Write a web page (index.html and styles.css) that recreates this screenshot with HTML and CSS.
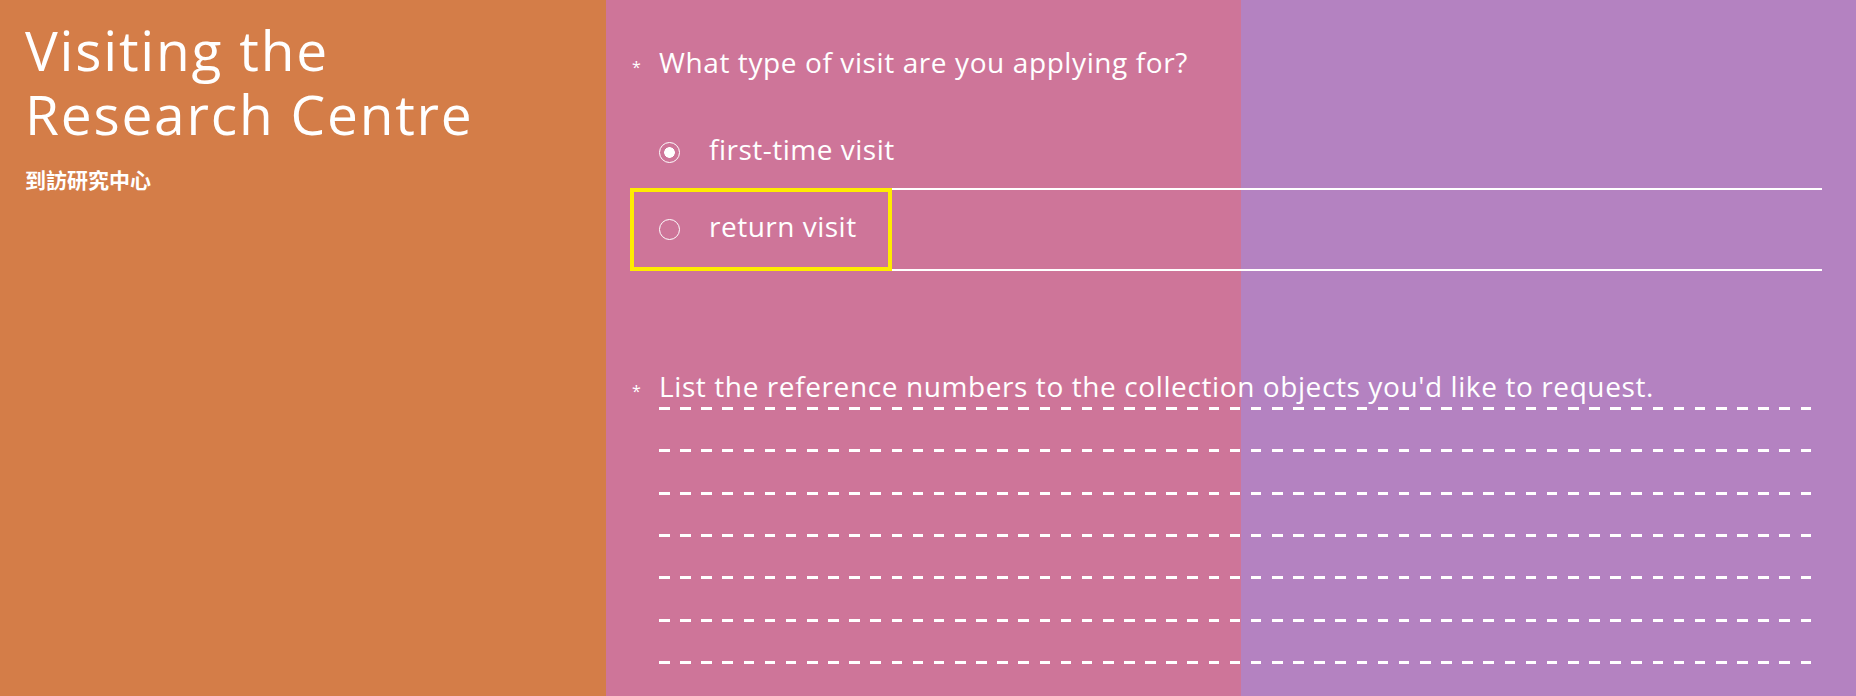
FILE: index.html
```html
<!DOCTYPE html>
<html lang="en">
<head>
<meta charset="utf-8">
<title>Visiting the Research Centre</title>
<link rel="stylesheet" href="styles.css">
</head>
<body>
<div class="page">
  <aside class="intro">
    <h1 class="intro-title">Visiting the<br>Research Centre</h1>
    <p class="intro-sub" lang="zh-Hant">到訪研究中心</p>
  </aside>
  <main class="form">
    <fieldset class="field">
      <legend class="question"><span class="req">*</span>What type of visit are you applying for?</legend>
      <div class="options">
        <div class="option option-first">
          <label class="choice">
            <input class="radio" type="radio" name="visit" checked>
            <span class="choice-text">first-time visit</span>
          </label>
        </div>
        <div class="option option-second">
          <label class="choice is-focused">
            <input class="radio" type="radio" name="visit">
            <span class="choice-text">return visit</span>
          </label>
        </div>
      </div>
    </fieldset>
    <div class="field field-list">
      <div class="question"><span class="req">*</span>List the reference numbers to the collection objects you'd like to request.</div>
      <div class="ruled" aria-label="reference numbers">
        <span class="rule"></span>
        <span class="rule"></span>
        <span class="rule"></span>
        <span class="rule"></span>
        <span class="rule"></span>
        <span class="rule"></span>
        <span class="rule"></span>
      </div>
    </div>
  </main>
</div>
</body>
</html>
```
FILE: styles.css
```css
html, body {
  margin: 0;
  padding: 0;
  height: 100%;
}

body {
  font-family: "Open Sans", "Noto Sans", sans-serif;
  color: #ffffff;
  overflow: hidden;
}

.page {
  display: grid;
  grid-template-columns: 606px 1fr;
  min-height: 100vh;
}

.intro {
  background: #d47d48;
  padding: 18px 0 0 25px;
}

.intro-title {
  margin: 0;
  font-weight: 400;
  font-size: 55px;
  line-height: 64px;
  letter-spacing: 1.8px;
}

.intro-sub {
  margin: 23px 0 0;
  font-family: "Noto Sans CJK TC", "Noto Sans CJK SC", sans-serif;
  font-weight: 700;
  font-size: 21px;
  line-height: 21px;
}

.form {
  background: linear-gradient(to right, #ce7599 0, #ce7599 635px, #b482c1 635px);
  padding: 44px 34px 0 24px;
}

.field {
  border: 0;
  margin: 0;
  padding: 0;
  min-width: 0;
}

.question {
  display: block;
  float: none;
  padding: 0;
  font-size: 28px;
  line-height: 36px;
  letter-spacing: 0.6px;
  white-space: nowrap;
}

.req {
  display: inline-block;
  box-sizing: border-box;
  width: 29px;
  padding-left: 2px;
  font-size: 16px;
  line-height: 1;
  letter-spacing: 0;
}

.options {
  margin-top: 36px;
}

.option {
  display: flex;
  border-bottom: 2px solid #ffffff;
}

.option-first {
  height: 72px;
}

.option-second {
  height: 79px;
}

.choice {
  display: inline-flex;
  align-items: center;
  gap: 29px;
  margin-left: 2px;
  padding: 0 33px 0 27px;
  font-size: 28px;
  line-height: 30px;
  letter-spacing: 0.5px;
}

.choice.is-focused {
  outline: 4px solid #ffec00;
  outline-offset: -2px;
}

.choice-text {
  padding-bottom: 7px;
}

.radio {
  appearance: none;
  -webkit-appearance: none;
  box-sizing: border-box;
  flex: 0 0 21px;
  width: 21px;
  height: 21px;
  margin: 0;
  border: 1.5px solid #ffffff;
  border-radius: 50%;
  background: transparent;
}

.radio:checked {
  background: radial-gradient(circle, #ffffff 0, #ffffff 5px, transparent 5.6px);
}

.field-list {
  margin-top: 97px;
}

.ruled {
  display: flex;
  flex-direction: column;
  gap: 39.33px;
  margin: 3px 0 0 29px;
}

.rule {
  display: block;
  height: 3px;
  background: repeating-linear-gradient(to right, #ffffff 0, #ffffff 10.57px, transparent 10.57px, transparent 21.14px);
}
```
